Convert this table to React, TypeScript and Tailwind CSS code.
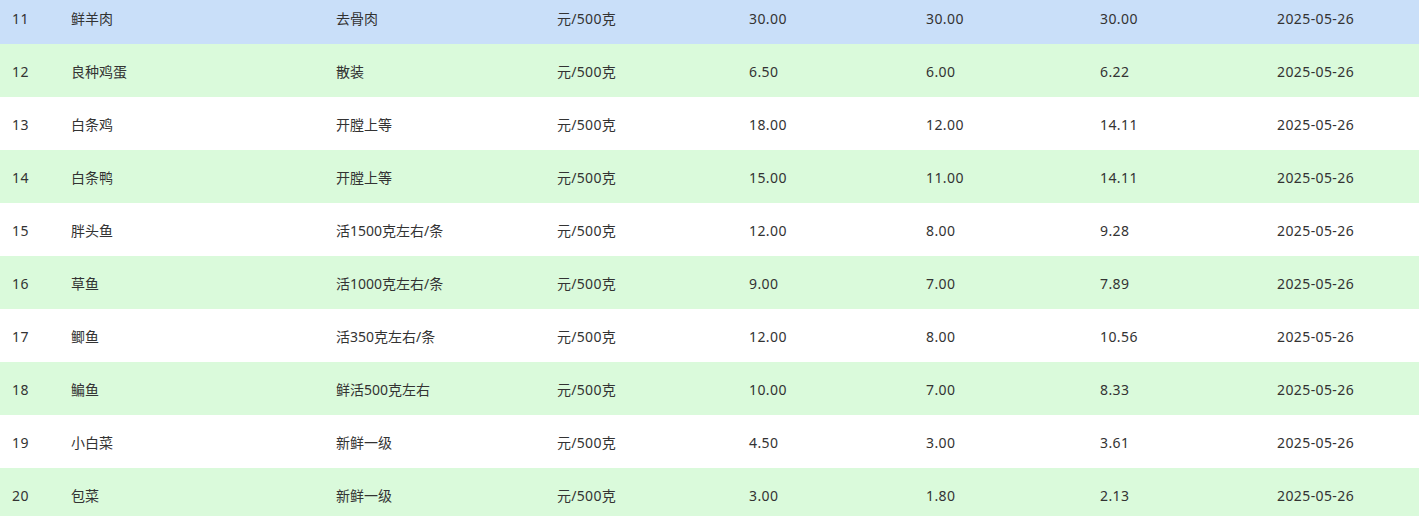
import React from 'react';

interface PriceRow {
  id: number;
  name: string;
  spec: string;
  unit: string;
  high: string;
  low: string;
  avg: string;
  date: string;
}

const rows: PriceRow[] = [
  { id: 11, name: '鲜羊肉', spec: '去骨肉', unit: '元/500克', high: '30.00', low: '30.00', avg: '30.00', date: '2025-05-26' },
  { id: 12, name: '良种鸡蛋', spec: '散装', unit: '元/500克', high: '6.50', low: '6.00', avg: '6.22', date: '2025-05-26' },
  { id: 13, name: '白条鸡', spec: '开膛上等', unit: '元/500克', high: '18.00', low: '12.00', avg: '14.11', date: '2025-05-26' },
  { id: 14, name: '白条鸭', spec: '开膛上等', unit: '元/500克', high: '15.00', low: '11.00', avg: '14.11', date: '2025-05-26' },
  { id: 15, name: '胖头鱼', spec: '活1500克左右/条', unit: '元/500克', high: '12.00', low: '8.00', avg: '9.28', date: '2025-05-26' },
  { id: 16, name: '草鱼', spec: '活1000克左右/条', unit: '元/500克', high: '9.00', low: '7.00', avg: '7.89', date: '2025-05-26' },
  { id: 17, name: '鲫鱼', spec: '活350克左右/条', unit: '元/500克', high: '12.00', low: '8.00', avg: '10.56', date: '2025-05-26' },
  { id: 18, name: '鳊鱼', spec: '鲜活500克左右', unit: '元/500克', high: '10.00', low: '7.00', avg: '8.33', date: '2025-05-26' },
  { id: 19, name: '小白菜', spec: '新鲜一级', unit: '元/500克', high: '4.50', low: '3.00', avg: '3.61', date: '2025-05-26' },
  { id: 20, name: '包菜', spec: '新鲜一级', unit: '元/500克', high: '3.00', low: '1.80', avg: '2.13', date: '2025-05-26' },
];

const cols = 'grid grid-cols-[59px_265px_221px_192px_177px_174px_177px_1fr]';

// slight extra spacing on the latin/numeric columns
const cellTracking = [
  'tracking-[0.4px]',
  '',
  '',
  'tracking-[0.3px]',
  'tracking-[0.4px]',
  'tracking-[0.4px]',
  'tracking-[0.4px]',
  'tracking-[0.4px]',
];

export default function App() {
  return (
    <div className="w-full h-[516px] overflow-hidden bg-white">
      <div
        className="-mt-[9px] text-[14px] text-[#333]"
        style={{ fontFamily: '"Noto Sans", "Noto Sans CJK SC", sans-serif' }}
      >
        {rows.map((r, i) => {
          const bg = i === 0 ? 'bg-[#c9dff9]' : i % 2 === 1 ? 'bg-[#dafadb]' : 'bg-white';
          return (
            <div key={r.id} className={`${cols} ${bg} h-[53px] items-center`}>
              {[r.id, r.name, r.spec, r.unit, r.high, r.low, r.avg, r.date].map((v, j) => (
                <div key={j} className={`pl-3 pt-[2px] whitespace-nowrap ${cellTracking[j]}`}>
                  {v}
                </div>
              ))}
            </div>
          );
        })}
      </div>
    </div>
  );
}
